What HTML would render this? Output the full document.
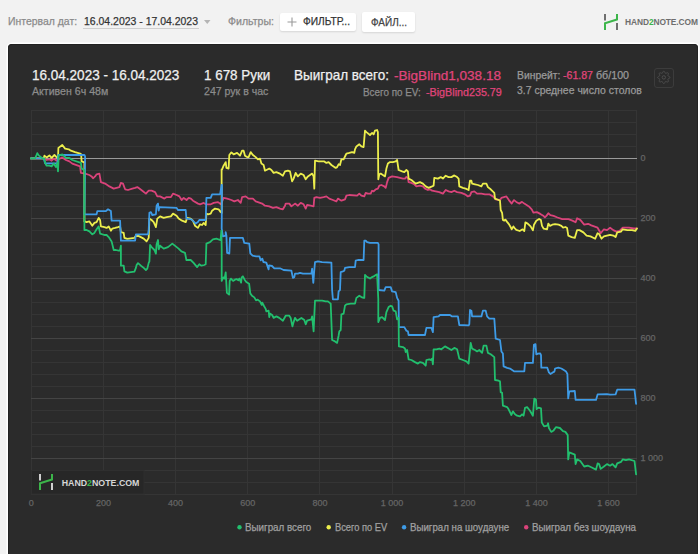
<!DOCTYPE html>
<html><head><meta charset="utf-8"><style>
html,body{margin:0;padding:0;}
body{width:700px;height:554px;overflow:hidden;background:#f2f2f2;position:relative;font-family:"Liberation Sans",sans-serif;}
.t{position:absolute;transform-origin:0 0;white-space:nowrap;line-height:1;-webkit-text-stroke:0.25px currentColor;font-family:"Liberation Sans",sans-serif;}
.ax{font-size:9px;color:#656565;}
.btn{position:absolute;background:#fff;border-radius:2px;box-shadow:0 1px 2px rgba(0,0,0,0.12);}
#panel{position:absolute;left:8px;top:44px;width:690px;height:530px;background:#2b2b2b;border-radius:4px;box-shadow:0 0 0 1.5px #fff, inset 0 0 0 1px #222;}
svg{position:absolute;left:0;top:0;}
</style></head><body>
<div class="btn" style="left:280px;top:13px;width:76px;height:18px;"></div>
<div class="btn" style="left:362px;top:12px;width:53px;height:20px;"></div>
<div style="position:absolute;left:83px;top:27.5px;width:116px;height:1px;background:#cfcfcf"></div>
<svg width="700" height="40" style="left:0;top:0">
 <path d="M204,20 L210.5,20 L207.25,24 Z" fill="#b5b5b5"/>
 <path d="M292,17.5 V26.5 M287.5,22 H296.5" stroke="#9a9a9a" stroke-width="1.1"/>
 <g transform="translate(604,14)"><rect x="0" y="0" width="2" height="6.5" fill="#6f6f6f"/><path d="M1,16 V9.3 L13,5.5 V0" fill="none" stroke="#3cb54a" stroke-width="2"/><rect x="12" y="9" width="2" height="7" fill="#6f6f6f"/></g>
</svg>
<div class="t" style="left:625.1px;top:18.19px;font-size:8.4px;font-weight:700;color:#6e6e6e;letter-spacing:-0.1px;-webkit-text-stroke:0">HAND<span style="color:#3cb54a">2</span>NOTE.COM</div>
<div id="panel"></div>
<svg width="700" height="554">
 <rect x="654.5" y="68.5" width="19" height="19" rx="2.5" fill="none" stroke="#3c3c3c" stroke-width="1"/>
 <g transform="translate(663.8,77.4)" fill="none" stroke="#4e4e4e" stroke-width="1">
  <path d="M0.00,-6.20 L0.40,-6.07 L0.75,-5.70 L1.03,-5.20 L1.26,-4.68 L1.45,-4.28 L1.68,-4.07 L2.00,-4.05 L2.42,-4.20 L2.94,-4.41 L3.50,-4.56 L4.01,-4.57 L4.38,-4.38 L4.57,-4.01 L4.56,-3.50 L4.41,-2.94 L4.20,-2.43 L4.05,-2.00 L4.07,-1.68 L4.28,-1.45 L4.68,-1.26 L5.20,-1.03 L5.70,-0.75 L6.07,-0.40 L6.20,0.00 L6.07,0.40 L5.70,0.75 L5.20,1.03 L4.68,1.26 L4.28,1.45 L4.07,1.68 L4.05,2.00 L4.20,2.42 L4.41,2.94 L4.56,3.50 L4.57,4.01 L4.38,4.38 L4.01,4.57 L3.50,4.56 L2.94,4.41 L2.42,4.20 L2.00,4.05 L1.68,4.07 L1.45,4.28 L1.26,4.68 L1.03,5.20 L0.75,5.70 L0.40,6.07 L0.00,6.20 L-0.40,6.07 L-0.75,5.70 L-1.03,5.20 L-1.26,4.68 L-1.45,4.28 L-1.68,4.07 L-2.00,4.05 L-2.42,4.20 L-2.94,4.41 L-3.50,4.56 L-4.01,4.57 L-4.38,4.38 L-4.57,4.01 L-4.56,3.50 L-4.41,2.94 L-4.20,2.43 L-4.05,2.00 L-4.07,1.68 L-4.28,1.45 L-4.68,1.26 L-5.20,1.03 L-5.70,0.75 L-6.07,0.40 L-6.20,0.00 L-6.07,-0.40 L-5.70,-0.75 L-5.20,-1.03 L-4.68,-1.26 L-4.28,-1.45 L-4.07,-1.68 L-4.05,-2.00 L-4.20,-2.43 L-4.41,-2.94 L-4.56,-3.50 L-4.57,-4.01 L-4.38,-4.38 L-4.01,-4.57 L-3.50,-4.56 L-2.94,-4.41 L-2.43,-4.20 L-2.00,-4.05 L-1.68,-4.07 L-1.45,-4.28 L-1.26,-4.68 L-1.03,-5.20 L-0.75,-5.70 L-0.40,-6.07Z"/><circle r="1.7"/>
 </g>
 <rect x="31" y="110" width="1" height="385" fill="#353535"/><rect x="103" y="110" width="1" height="385" fill="#353535"/><rect x="175" y="110" width="1" height="385" fill="#353535"/><rect x="247" y="110" width="1" height="385" fill="#353535"/><rect x="319" y="110" width="1" height="385" fill="#353535"/><rect x="392" y="110" width="1" height="385" fill="#353535"/><rect x="464" y="110" width="1" height="385" fill="#353535"/><rect x="536" y="110" width="1" height="385" fill="#353535"/><rect x="608" y="110" width="1" height="385" fill="#353535"/><rect x="636" y="110" width="1" height="385" fill="#353535"/><rect x="31" y="110" width="606" height="1" fill="#353535"/><rect x="31" y="122" width="606" height="1" fill="#353535"/><rect x="31" y="134" width="606" height="1" fill="#353535"/><rect x="31" y="146" width="606" height="1" fill="#353535"/><rect x="31" y="158" width="606" height="1" fill="#9a9a9a"/><rect x="31" y="170" width="606" height="1" fill="#353535"/><rect x="31" y="182" width="606" height="1" fill="#353535"/><rect x="31" y="194" width="606" height="1" fill="#353535"/><rect x="31" y="206" width="606" height="1" fill="#353535"/><rect x="31" y="218" width="606" height="1" fill="#444444"/><rect x="31" y="230" width="606" height="1" fill="#353535"/><rect x="31" y="242" width="606" height="1" fill="#353535"/><rect x="31" y="254" width="606" height="1" fill="#353535"/><rect x="31" y="266" width="606" height="1" fill="#353535"/><rect x="31" y="278" width="606" height="1" fill="#444444"/><rect x="31" y="290" width="606" height="1" fill="#353535"/><rect x="31" y="302" width="606" height="1" fill="#353535"/><rect x="31" y="314" width="606" height="1" fill="#353535"/><rect x="31" y="326" width="606" height="1" fill="#353535"/><rect x="31" y="338" width="606" height="1" fill="#444444"/><rect x="31" y="350" width="606" height="1" fill="#353535"/><rect x="31" y="362" width="606" height="1" fill="#353535"/><rect x="31" y="374" width="606" height="1" fill="#353535"/><rect x="31" y="386" width="606" height="1" fill="#353535"/><rect x="31" y="398" width="606" height="1" fill="#444444"/><rect x="31" y="410" width="606" height="1" fill="#353535"/><rect x="31" y="422" width="606" height="1" fill="#353535"/><rect x="31" y="434" width="606" height="1" fill="#353535"/><rect x="31" y="446" width="606" height="1" fill="#353535"/><rect x="31" y="458" width="606" height="1" fill="#444444"/><rect x="31" y="470" width="606" height="1" fill="#353535"/><rect x="31" y="482" width="606" height="1" fill="#353535"/><rect x="31" y="494" width="606" height="1" fill="#353535"/>
 <g fill="none" stroke-width="1.8" stroke-linejoin="round" stroke-linecap="round">
<path d="M31.0,158.4 L43.7,158.3 L44.4,158.6 L46.6,160.0 L49.4,159.3 L51.6,160.7 L53.7,158.6 L56.6,160.7 L58.7,159.3 L62.3,157.4 L65.9,160.0 L69.4,161.4 L72.3,163.6 L80.1,166.4 L80.9,172.9 L85.1,173.6 L89.4,175.0 L91.6,176.4 L93.0,178.3 L95.1,176.4 L96.6,174.3 L99.4,173.6 L100.9,182.1 L105.1,183.6 L109.4,186.4 L113.7,188.6 L119.4,187.1 L120.9,182.9 L123.0,183.6 L125.1,189.3 L128.0,190.0 L132.3,188.6 L135.1,187.9 L137.3,187.1 L139.4,188.6 L142.3,190.7 L145.9,193.6 L148.7,190.7 L151.6,190.7 L155.1,192.1 L157.3,196.4 L160.1,196.4 L164.4,198.6 L166.6,197.1 L170.9,197.1 L173.0,193.6 L176.6,195.0 L179.4,196.4 L181.6,200.0 L183.7,197.9 L186.6,200.0 L188.7,197.9 L190.9,198.6 L193.0,200.7 L198.0,203.6 L200.1,204.3 L203.7,202.9 L205.9,204.3 L210.9,204.3 L213.7,202.9 L218.0,202.1 L220.9,204.3 L223.6,197.9 L227.1,198.6 L231.4,200.0 L234.3,201.4 L237.9,200.0 L240.7,202.9 L242.1,197.1 L245.7,196.4 L248.6,198.6 L252.9,198.6 L255.7,201.4 L257.9,202.1 L262.1,203.6 L265.0,205.7 L269.3,206.4 L272.9,207.9 L276.4,207.1 L280.0,208.6 L282.9,209.3 L285.0,205.7 L285.7,203.6 L289.3,203.6 L291.4,206.4 L295.0,203.6 L297.9,205.7 L300.7,202.9 L303.6,204.3 L305.7,208.6 L307.1,205.0 L310.7,205.7 L313.6,206.4 L314.3,197.9 L316.4,197.1 L320.0,197.9 L323.6,197.1 L326.4,196.4 L329.3,198.6 L332.9,200.0 L336.4,201.4 L337.9,198.6 L341.4,200.7 L345.0,199.3 L346.4,195.7 L349.3,195.0 L357.1,195.7 L359.3,193.6 L361.4,195.7 L364.3,196.4 L365.7,192.9 L367.9,193.6 L370.7,193.6 L372.1,190.7 L373.6,191.4 L375.7,189.3 L377.9,188.6 L379.3,185.7 L381.4,185.0 L384.3,186.4 L385.7,187.9 L387.1,182.1 L388.6,177.9 L392.1,176.4 L397.1,177.1 L402.9,178.6 L405.0,178.6 L406.4,176.9 L407.9,177.9 L408.6,182.1 L411.4,182.9 L414.3,184.3 L416.4,186.4 L420.0,185.7 L422.9,186.4 L425.0,188.6 L427.9,190.0 L430.0,189.3 L432.1,190.7 L435.7,191.4 L439.3,192.1 L442.9,193.6 L445.7,190.0 L448.6,191.4 L451.4,192.1 L454.3,190.7 L457.1,192.1 L461.4,192.9 L465.0,194.3 L467.9,196.4 L470.0,195.7 L471.4,192.1 L474.3,191.4 L477.1,193.6 L481.4,193.6 L485.0,194.3 L489.3,194.3 L492.9,196.4 L495.7,199.3 L500.0,200.0 L501.4,197.9 L506.4,196.4 L508.9,200.1 L511.7,203.6 L514.0,200.1 L516.3,201.9 L519.1,203.6 L522.0,201.9 L524.3,203.6 L528.9,206.4 L531.7,209.3 L533.4,212.7 L536.9,212.1 L540.3,213.9 L543.7,216.1 L544.9,217.3 L546.6,215.6 L548.3,213.3 L550.4,215.1 L553.6,215.9 L557.5,217.5 L562.2,219.1 L568.5,219.1 L572.4,220.6 L575.6,222.2 L577.1,218.3 L580.3,219.9 L584.2,224.6 L588.1,223.8 L591.3,225.4 L597.6,227.7 L600.7,233.2 L603.9,229.3 L607.0,230.1 L610.1,227.7 L613.3,230.1 L616.4,231.6 L619.6,230.9 L622.7,227.7 L625.9,227.7 L629.0,227.7 L633.7,228.5 L636.9,228.5" stroke="#d9437a" />
<path d="M31.0,158.4 L43.7,158.3 L44.4,155.7 L46.6,157.4 L49.4,155.4 L51.6,157.9 L54.4,155.0 L57.3,157.9 L58.0,158.3 L58.4,147.9 L62.3,145.0 L65.1,148.6 L68.7,149.3 L70.9,150.7 L75.1,152.1 L80.1,153.6 L81.1,154.3 L81.6,161.4 L83.7,162.1 L84.4,162.1 L84.4,221.4 L86.6,222.1 L89.4,221.4 L92.3,225.7 L94.4,222.9 L96.6,222.1 L98.7,217.9 L100.1,220.0 L100.9,226.4 L104.4,227.1 L106.6,227.9 L108.7,226.4 L110.9,230.7 L112.3,228.6 L115.1,227.9 L118.0,227.1 L120.1,226.4 L120.9,232.1 L123.7,232.9 L124.4,237.9 L127.3,238.9 L134.4,237.9 L136.6,235.0 L139.4,236.4 L143.7,238.6 L146.6,241.4 L148.7,237.9 L149.4,218.6 L151.6,220.0 L153.7,222.1 L155.9,227.1 L157.3,218.6 L160.1,216.4 L163.7,217.9 L166.6,217.1 L170.9,216.4 L173.0,213.6 L176.6,215.7 L178.6,218.6 L182.1,220.7 L185.7,222.1 L187.1,217.9 L190.7,218.6 L192.9,220.7 L195.0,225.7 L197.9,227.9 L200.0,224.3 L202.1,225.0 L203.6,222.9 L205.7,225.0 L206.4,213.6 L207.9,214.3 L210.7,213.6 L212.1,210.7 L215.0,208.6 L218.6,209.3 L220.7,212.1 L221.7,212.9 L221.6,169.3 L222.1,169.3 L223.6,165.7 L225.7,162.1 L226.4,167.9 L228.6,168.6 L229.3,155.0 L231.4,152.4 L233.6,154.3 L237.1,152.9 L240.0,155.7 L242.1,150.7 L243.6,150.7 L245.0,155.7 L247.1,157.1 L248.6,157.1 L250.7,152.1 L252.9,155.0 L255.7,157.1 L257.9,159.3 L260.0,158.6 L261.4,163.6 L263.6,165.0 L265.0,170.7 L267.9,169.3 L269.3,168.6 L271.4,170.0 L273.6,172.9 L276.4,172.1 L279.3,173.3 L282.9,175.7 L285.0,171.4 L287.9,170.7 L290.0,171.4 L292.1,181.4 L293.6,178.6 L295.7,172.9 L297.9,176.4 L300.7,173.6 L303.6,175.0 L305.7,179.3 L307.9,176.4 L312.1,173.6 L313.6,176.4 L314.3,188.6 L315.0,160.7 L318.6,161.4 L324.3,161.4 L326.4,162.9 L328.6,162.1 L331.4,165.0 L335.7,167.9 L337.1,167.1 L338.6,164.3 L340.0,165.0 L341.4,159.3 L343.6,159.3 L345.7,155.0 L346.4,153.6 L349.3,152.9 L352.1,152.1 L354.3,152.9 L355.0,149.3 L356.4,146.4 L359.3,144.3 L361.4,146.4 L363.6,147.1 L365.0,130.7 L366.4,132.1 L370.0,135.0 L372.1,132.9 L373.6,134.3 L375.0,130.7 L377.1,130.0 L377.9,132.1 L378.3,179.3 L379.3,174.3 L380.7,173.6 L385.0,176.4 L386.4,168.6 L387.9,163.6 L390.0,162.1 L392.9,162.1 L395.7,161.4 L397.1,160.0 L398.6,170.0 L402.1,171.4 L404.3,172.1 L406.4,170.0 L407.9,171.4 L408.6,178.6 L411.4,180.0 L415.7,183.6 L420.0,182.1 L422.9,183.6 L425.7,186.4 L428.6,187.9 L432.1,186.4 L433.6,185.7 L434.3,177.9 L437.9,178.6 L440.7,177.1 L442.9,178.6 L445.7,175.7 L448.6,177.1 L451.4,177.1 L454.3,175.4 L457.1,177.1 L458.6,178.6 L459.3,186.4 L462.9,187.9 L465.7,188.6 L468.6,190.0 L470.0,180.7 L471.4,180.7 L472.1,183.6 L475.0,184.3 L477.9,185.0 L481.4,186.4 L482.9,183.6 L486.4,183.6 L487.9,187.1 L490.7,189.3 L494.3,192.9 L495.0,198.6 L498.6,200.0 L500.0,200.7 L500.7,210.0 L502.1,212.9 L502.9,220.0 L504.3,220.7 L505.4,219.6 L507.1,221.9 L508.9,224.1 L510.6,227.0 L511.7,229.3 L513.4,226.4 L514.6,228.1 L516.3,229.9 L519.7,231.0 L522.6,229.3 L524.3,231.0 L525.4,222.4 L527.7,223.6 L530.6,226.4 L532.9,230.4 L534.0,224.7 L536.3,220.7 L539.1,219.0 L540.9,220.1 L542.0,225.9 L543.7,228.7 L547.1,229.3 L548.3,223.6 L550.0,225.9 L552.3,224.7 L555.1,224.1 L558.6,224.7 L561.4,225.9 L563.1,227.6 L565.4,227.0 L567.1,228.1 L568.3,235.6 L571.6,237.1 L574.8,237.9 L577.1,230.1 L579.5,230.1 L583.4,232.4 L586.6,235.6 L590.5,236.4 L595.2,238.7 L597.6,233.2 L599.1,234.0 L601.5,238.7 L603.9,236.4 L607.0,235.6 L610.1,234.8 L613.3,235.6 L615.6,237.1 L617.2,232.4 L621.1,231.6 L622.7,229.3 L627.4,230.1 L632.1,230.1 L635.3,230.9 L636.9,228.5" stroke="#ecee4c" />
<path d="M31.0,158.4 L43.7,158.3 L45.1,163.3 L57.3,163.3 L58.3,155.0 L84.4,155.0 L85.1,156.4 L84.4,214.3 L96.6,214.3 L97.3,211.1 L105.9,211.1 L108.0,209.3 L110.9,211.1 L111.6,220.7 L120.1,220.7 L120.9,240.7 L135.1,240.7 L135.9,234.3 L148.0,234.3 L148.7,230.0 L149.4,212.9 L150.9,212.1 L152.3,215.0 L155.9,214.3 L156.6,205.7 L158.0,203.6 L158.7,210.7 L159.4,207.1 L176.6,207.9 L177.9,210.0 L185.7,210.0 L186.4,218.6 L191.4,219.3 L194.3,222.1 L195.7,223.6 L197.9,222.1 L199.3,220.0 L205.7,220.0 L206.4,197.9 L210.7,197.9 L212.1,194.3 L220.0,194.3 L220.1,194.3 L221.6,185.0 L222.0,185.0 L221.7,228.6 L222.9,236.4 L225.7,235.7 L225.7,232.1 L226.4,235.7 L227.1,252.9 L229.3,253.6 L230.0,237.9 L242.9,237.9 L244.3,242.9 L249.3,243.6 L250.3,253.4 L252.6,255.7 L256.0,256.3 L259.4,256.3 L260.6,260.3 L262.3,258.6 L263.4,262.0 L266.3,262.6 L268.6,269.4 L269.1,265.4 L272.0,266.0 L274.3,268.3 L280.0,268.3 L283.6,270.0 L291.4,270.7 L292.9,277.9 L294.3,277.1 L295.0,273.6 L297.9,273.6 L300.0,272.9 L302.9,273.6 L311.4,273.6 L312.1,268.6 L313.3,282.9 L314.3,270.0 L315.0,262.1 L317.9,261.4 L322.1,262.1 L331.4,262.6 L332.1,290.0 L332.9,299.3 L337.9,299.3 L338.6,291.4 L340.0,290.0 L340.7,272.1 L342.9,271.4 L344.3,270.7 L345.0,267.9 L349.3,267.1 L355.0,267.1 L355.7,260.7 L357.9,260.0 L363.6,260.0 L364.3,240.7 L365.7,240.7 L367.1,242.1 L370.0,242.9 L377.9,242.9 L378.6,244.3 L378.6,290.0 L384.3,290.7 L385.7,287.1 L390.7,287.1 L392.1,291.4 L395.7,292.1 L397.1,297.9 L398.6,300.7 L398.9,327.1 L404.3,327.1 L406.4,330.7 L407.9,331.4 L408.6,335.0 L425.0,335.0 L426.4,327.9 L431.4,327.9 L432.9,332.1 L433.6,317.1 L438.6,316.4 L440.0,315.0 L450.0,315.0 L452.1,316.4 L457.9,316.4 L459.3,325.0 L468.6,325.4 L469.3,324.3 L470.0,310.0 L471.4,310.7 L472.1,316.4 L481.4,316.4 L482.9,310.7 L485.7,310.7 L487.1,316.4 L489.3,318.6 L494.3,318.6 L495.7,338.6 L500.0,340.0 L501.4,351.4 L502.9,353.6 L503.6,366.4 L507.1,367.9 L510.0,368.6 L514.3,371.4 L524.3,371.4 L525.0,362.9 L532.9,362.9 L533.9,344.9 L535.5,344.1 L536.3,354.4 L537.9,353.6 L540.2,353.3 L541.0,355.1 L541.3,367.7 L547.3,367.7 L548.9,372.4 L550.4,374.0 L552.8,372.4 L554.4,371.6 L555.1,368.5 L558.3,367.7 L561.4,368.5 L563.8,370.1 L566.1,371.6 L567.4,374.0 L568.2,398.4 L569.3,391.3 L574.8,391.0 L575.6,399.9 L596.0,399.9 L597.6,394.4 L607.0,394.1 L610.1,394.7 L615.6,394.4 L617.2,389.7 L634.5,389.7 L636.1,403.9" stroke="#3e9be6" />
<path d="M31.0,158.4 L35.1,158.3 L36.3,155.7 L37.3,153.1 L38.7,155.4 L42.3,158.3 L44.4,158.6 L45.1,162.9 L46.6,165.7 L49.4,165.7 L51.6,166.4 L53.7,163.6 L55.9,167.1 L57.3,162.9 L58.0,171.4 L58.7,155.7 L62.3,154.3 L65.9,157.9 L69.4,157.9 L72.3,160.0 L80.9,162.9 L81.6,168.6 L84.4,170.0 L84.4,180.0 L84.4,230.0 L86.6,230.0 L89.4,231.4 L92.3,234.3 L94.4,232.9 L96.6,229.3 L98.7,226.4 L100.1,233.6 L104.4,235.0 L106.6,235.0 L108.7,237.1 L111.6,241.4 L113.7,250.0 L115.9,250.0 L118.7,250.7 L120.1,250.0 L120.9,245.7 L120.9,265.7 L123.7,265.7 L124.4,271.4 L127.3,272.6 L134.4,271.7 L135.9,267.9 L136.6,265.0 L138.0,263.1 L140.9,265.7 L143.7,267.9 L145.9,270.0 L147.3,268.6 L148.7,262.9 L149.4,261.4 L150.1,245.0 L151.6,247.1 L154.4,250.0 L155.9,253.6 L156.6,244.3 L158.0,240.0 L158.7,249.3 L160.1,245.7 L163.7,248.6 L168.0,247.1 L172.3,243.6 L178.6,248.6 L181.4,251.4 L185.0,252.9 L186.4,260.0 L190.7,260.0 L193.6,262.9 L197.1,267.1 L199.3,264.3 L201.4,265.7 L204.3,265.0 L205.7,264.3 L206.4,243.6 L210.0,242.1 L212.9,239.3 L216.4,238.6 L220.0,240.0 L220.7,238.6 L221.4,230.7 L221.7,250.0 L221.7,280.9 L223.4,277.4 L224.6,278.6 L225.7,272.3 L226.9,292.9 L229.1,294.6 L229.7,280.9 L230.9,278.6 L233.1,280.9 L234.9,279.7 L236.6,279.1 L238.3,280.3 L239.4,278.6 L241.1,282.6 L241.7,277.4 L242.9,276.3 L244.6,279.7 L246.3,282.0 L249.1,283.7 L250.3,293.4 L252.0,295.7 L254.3,297.4 L256.0,300.3 L257.7,299.7 L260.0,301.4 L261.7,304.9 L262.3,302.6 L264.0,306.0 L265.7,308.9 L266.4,311.4 L268.6,310.7 L269.3,317.1 L270.0,313.6 L272.1,315.0 L273.6,317.9 L276.4,316.4 L279.3,317.9 L282.9,320.7 L285.7,315.7 L289.3,315.7 L290.7,317.9 L292.4,326.4 L293.6,322.1 L295.0,317.9 L297.1,320.7 L301.4,317.9 L304.3,320.0 L305.7,324.3 L307.1,320.7 L311.4,319.3 L312.1,316.4 L313.6,331.4 L315.0,300.7 L317.9,300.7 L322.1,300.7 L325.7,301.4 L327.9,301.4 L330.7,303.6 L332.1,340.0 L335.0,341.4 L337.1,342.9 L338.6,335.7 L339.3,331.4 L340.7,330.0 L341.4,314.3 L343.6,313.6 L345.0,305.7 L346.4,304.3 L350.7,303.6 L355.0,303.6 L356.4,297.9 L359.3,295.7 L361.4,297.1 L363.6,297.9 L364.3,297.9 L365.0,275.0 L366.4,276.4 L370.0,278.6 L372.1,277.1 L373.6,276.4 L375.7,275.0 L377.1,274.3 L378.3,299.0 L378.3,322.1 L380.0,317.9 L382.1,317.1 L385.0,320.0 L386.4,312.1 L388.6,307.1 L390.7,305.7 L392.1,306.4 L393.6,310.7 L395.7,311.4 L397.1,319.3 L398.6,317.9 L398.9,346.4 L402.9,347.1 L405.0,348.6 L405.7,352.1 L407.1,350.0 L408.6,359.3 L411.4,360.0 L415.0,362.1 L417.9,363.6 L420.0,362.1 L422.9,362.9 L425.7,365.7 L426.4,360.0 L429.3,359.3 L430.7,360.0 L432.1,358.6 L432.9,364.3 L433.6,349.3 L436.4,349.3 L439.3,348.6 L441.4,349.3 L445.0,346.4 L451.4,350.0 L454.3,347.9 L457.1,349.3 L459.3,358.6 L462.9,360.0 L466.4,361.4 L468.6,363.6 L470.0,350.0 L470.7,342.9 L472.1,348.6 L475.0,350.0 L477.1,351.4 L479.3,350.0 L482.1,352.9 L483.6,345.7 L486.4,345.7 L487.9,352.9 L490.7,354.3 L494.3,357.1 L495.0,380.0 L498.6,380.7 L500.0,381.4 L500.7,392.1 L502.1,392.9 L502.9,405.7 L505.0,406.4 L507.1,407.1 L508.6,409.3 L511.4,415.0 L512.9,411.4 L515.0,414.3 L517.1,415.7 L520.0,416.4 L522.1,414.3 L523.6,415.7 L525.0,407.9 L527.1,407.1 L530.0,410.7 L532.9,415.7 L534.3,398.6 L536.0,399.7 L536.6,409.1 L538.6,407.6 L541.0,408.4 L541.8,422.5 L544.1,426.4 L547.3,425.6 L548.1,423.3 L548.9,428.0 L551.2,431.9 L553.6,430.4 L555.9,427.2 L559.9,428.0 L563.0,431.1 L565.4,431.9 L567.7,435.1 L568.2,459.4 L569.3,452.4 L574.8,454.7 L575.6,464.1 L577.1,459.4 L580.3,461.0 L584.2,466.5 L588.1,465.7 L591.3,467.3 L596.0,469.6 L597.6,463.4 L599.1,464.1 L600.7,468.9 L603.9,466.5 L607.0,464.1 L610.1,465.7 L612.5,464.1 L615.6,467.3 L617.2,463.4 L621.1,461.8 L622.7,459.4 L625.9,460.2 L629.0,459.4 L634.5,461.0 L636.1,474.4" stroke="#22bf6e" />
</g>
 <rect x="31.5" y="470.5" width="112.5" height="23.5" fill="#272727" stroke="#2f2f2f" stroke-width="1"/>
 <g transform="translate(39,474)"><rect x="0" y="0" width="2" height="6.5" fill="#cfcfcf"/><path d="M1,16 V9.3 L13,5.5 V0" fill="none" stroke="#3cb54a" stroke-width="2"/><rect x="12" y="9" width="2" height="7" fill="#cfcfcf"/></g>
 <circle cx="239.5" cy="527.3" r="2.2" fill="#22bf6e"/>
 <circle cx="328.7" cy="527.3" r="2.2" fill="#ecee4c"/>
 <circle cx="404.1" cy="527.3" r="2.2" fill="#3e9be6"/>
 <circle cx="526.2" cy="527.3" r="2.2" fill="#d9437a"/>
</svg>
<div class="t" style="left:61.7px;top:478.75px;font-size:8.8px;font-weight:700;color:#d6d6d6;letter-spacing:0.0px;-webkit-text-stroke:0">HAND<span style="color:#3cb54a">2</span>NOTE.COM</div>
<div class="t" style="left:7.9px;top:15.67px;font-size:11.5px;color:#8a8a8a;transform:scaleX(0.9073)">Интервал дат:</div><div class="t" style="left:84.0px;top:15.67px;font-size:11.5px;color:#333333;transform:scaleX(0.9095)">16.04.2023 - 17.04.2023</div><div class="t" style="left:228.4px;top:16.27px;font-size:11.5px;color:#8a8a8a;transform:scaleX(0.9183)">Фильтры:</div><div class="t" style="left:303.0px;top:16.27px;font-size:11.5px;color:#333333;transform:scaleX(0.8857)">ФИЛЬТР...</div><div class="t" style="left:370.6px;top:16.58px;font-size:11.25px;color:#444444;transform:scaleX(0.8855)">ФАЙЛ...</div><div class="t" style="left:31.8px;top:68.43px;font-size:14.5px;color:#f0f0f0;transform:scaleX(0.9327)">16.04.2023 - 16.04.2023</div><div class="t" style="left:31.8px;top:86.37px;font-size:11.5px;color:#8c8c8c;transform:scaleX(0.9210)">Активен 6ч 48м</div><div class="t" style="left:203.5px;top:68.43px;font-size:14.5px;color:#f0f0f0;transform:scaleX(0.9248)">1 678 Руки</div><div class="t" style="left:203.5px;top:86.37px;font-size:11.5px;color:#8c8c8c;transform:scaleX(0.9190)">247 рук в час</div><div class="t" style="left:294.4px;top:68.43px;font-size:14.5px;color:#f0f0f0;transform:scaleX(0.9311)">Выиграл всего:</div><div class="t" style="left:394.4px;top:69.07px;font-size:13.5px;color:#e0457b;transform:scaleX(1.0040)">-BigBlind1,038.18</div><div class="t" style="left:363.0px;top:87.31px;font-size:10.5px;color:#8c8c8c;transform:scaleX(0.9408)">Всего по EV:</div><div class="t" style="left:425.6px;top:87.31px;font-size:10.5px;color:#e0457b;transform:scaleX(1.0224)">-BigBlind235.79</div><div class="t" style="left:516.6px;top:70.11px;font-size:10.5px;color:#9a9a9a;transform:scaleX(0.9874)">Винрейт:</div><div class="t" style="left:563.0px;top:70.11px;font-size:10.5px;color:#e0457b;transform:scaleX(1.0073)">-61.87</div><div class="t" style="left:596.0px;top:70.11px;font-size:10.5px;color:#9a9a9a;transform:scaleX(1.0164)">бб/100</div><div class="t" style="left:516.6px;top:84.71px;font-size:10.5px;color:#9a9a9a;transform:scaleX(0.9941)">3.7 среднее число столов</div><div class="t" style="left:245.4px;top:523.12px;font-size:10.25px;color:#a0a0a0;transform:scaleX(0.9570)">Выиграл всего</div><div class="t" style="left:334.9px;top:523.12px;font-size:10.25px;color:#a0a0a0;transform:scaleX(0.9061)">Всего по EV</div><div class="t" style="left:409.8px;top:523.12px;font-size:10.25px;color:#a0a0a0;transform:scaleX(0.9469)">Выиграл на шоудауне</div><div class="t" style="left:532.1px;top:523.12px;font-size:10.25px;color:#a0a0a0;transform:scaleX(0.9513)">Выиграл без шоудауна</div>
<div class="t ax" style="left:640.4px;top:153.8px">0</div><div class="t ax" style="left:640.4px;top:213.8px">200</div><div class="t ax" style="left:640.4px;top:273.8px">400</div><div class="t ax" style="left:640.4px;top:333.8px">600</div><div class="t ax" style="left:640.4px;top:393.8px">800</div><div class="t ax" style="left:640.4px;top:453.8px">1 000</div>
<div class="t ax" style="left:1.3px;width:60px;text-align:center;top:498.8px">0</div><div class="t ax" style="left:73.5px;width:60px;text-align:center;top:498.8px">200</div><div class="t ax" style="left:145.6px;width:60px;text-align:center;top:498.8px">400</div><div class="t ax" style="left:217.8px;width:60px;text-align:center;top:498.8px">600</div><div class="t ax" style="left:289.9px;width:60px;text-align:center;top:498.8px">800</div><div class="t ax" style="left:362.1px;width:60px;text-align:center;top:498.8px">1 000</div><div class="t ax" style="left:434.3px;width:60px;text-align:center;top:498.8px">1 200</div><div class="t ax" style="left:506.4px;width:60px;text-align:center;top:498.8px">1 400</div><div class="t ax" style="left:578.6px;width:60px;text-align:center;top:498.8px">1 600</div>
</body></html>
